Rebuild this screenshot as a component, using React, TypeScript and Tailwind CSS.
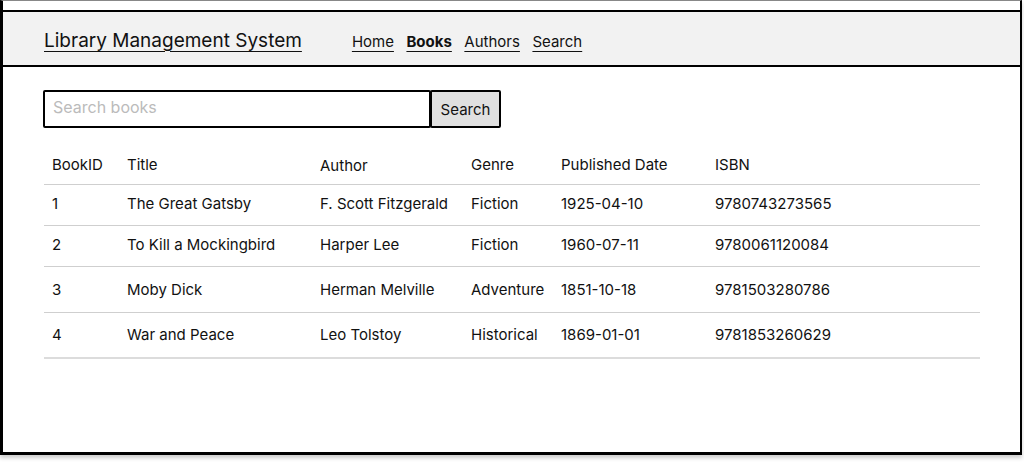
import React from "react";

const books = [
  { id: "1", title: "The Great Gatsby", author: "F. Scott Fitzgerald", genre: "Fiction", date: "1925-04-10", isbn: "9780743273565", h: "h-[41px]" },
  { id: "2", title: "To Kill a Mockingbird", author: "Harper Lee", genre: "Fiction", date: "1960-07-11", isbn: "9780061120084", h: "h-[41px]" },
  { id: "3", title: "Moby Dick", author: "Herman Melville", genre: "Adventure", date: "1851-10-18", isbn: "9781503280786", h: "h-[46px]" },
  { id: "4", title: "War and Peace", author: "Leo Tolstoy", genre: "Historical", date: "1869-01-01", isbn: "9781853260629", h: "h-[46px]" },
];

const cols = ["w-[75px]", "w-[193px]", "w-[151px]", "w-[90px]", "w-[154px]", "flex-1"];

const App: React.FC = () => {
  return (
    <div className="w-[1024px] h-[463px] bg-white" style={{ fontFamily: "Inter, 'Liberation Sans', sans-serif" }}>
      <div className="w-[1022px] h-[455px] bg-white border-l-[3px] border-r-2 border-b-[3px] border-t border-black border-t-[#888] shadow-[0_3px_4px_rgba(0,0,0,0.2)] pt-[9px]">
        <header className="-ml-[3px] h-[57px] bg-[#f2f2f2] border-y-2 border-l-[3px] border-black flex items-center pl-[41px] pt-[3px]">
          <a href="#" className="text-[19px] text-[#111] underline underline-offset-[4px] decoration-1 leading-none">
            Library Management System
          </a>
          <nav className="ml-[50px] mt-[2px] flex gap-[12.5px] text-[15px] text-[#111] leading-none">
            <a href="#" className="underline underline-offset-[4px] decoration-1">Home</a>
            <a href="#" className="underline underline-offset-[4px] decoration-1 font-bold">Books</a>
            <a href="#" className="underline underline-offset-[4px] decoration-1">Authors</a>
            <a href="#" className="underline underline-offset-[4px] decoration-1">Search</a>
          </nav>
        </header>

        <main className="pl-[40px] pr-[40px]">
          <div className="mt-[23px] flex">
            <input
              placeholder="Search books"
              className="w-[388px] h-[38px] border-2 border-black rounded-[2px] px-[8px] text-[16px] placeholder:text-[#bbb] outline-none pb-[4px]"
            />
            <button className="-ml-px w-[71px] h-[38px] border-2 border-black rounded-[2px] bg-[#e0e0e0] text-[15px] text-[#111] pt-[2px]">
              Search
            </button>
          </div>

          <div className="mt-[19px] w-[936px] ml-[1px] text-[15px] text-[#111]">
            <div className="flex h-[38px] items-center border-b border-[#cfcfcf]">
              {["BookID", "Title", "Author", "Genre", "Published Date", "ISBN"].map((c, i) => (
                <div key={c} className={`${cols[i]} pl-[8px] ${c === "Author" ? "mt-[2px]" : ""}`}>{c}</div>
              ))}
            </div>
            {books.map((b, idx) => (
              <div
                key={b.id}
                className={`flex ${b.h} items-center ${idx === books.length - 1 ? "border-b-2 border-[#dcdcdc]" : "border-b border-[#cfcfcf]"}`}
              >
                {[b.id, b.title, b.author, b.genre, b.date, b.isbn].map((v, i) => (
                  <div key={i} className={`${cols[i]} pl-[8px] ${idx < 2 ? "-mt-[2px]" : "mt-[1px]"}`}>{v}</div>
                ))}
              </div>
            ))}
          </div>
        </main>
      </div>
    </div>
  );
};

export default App;
